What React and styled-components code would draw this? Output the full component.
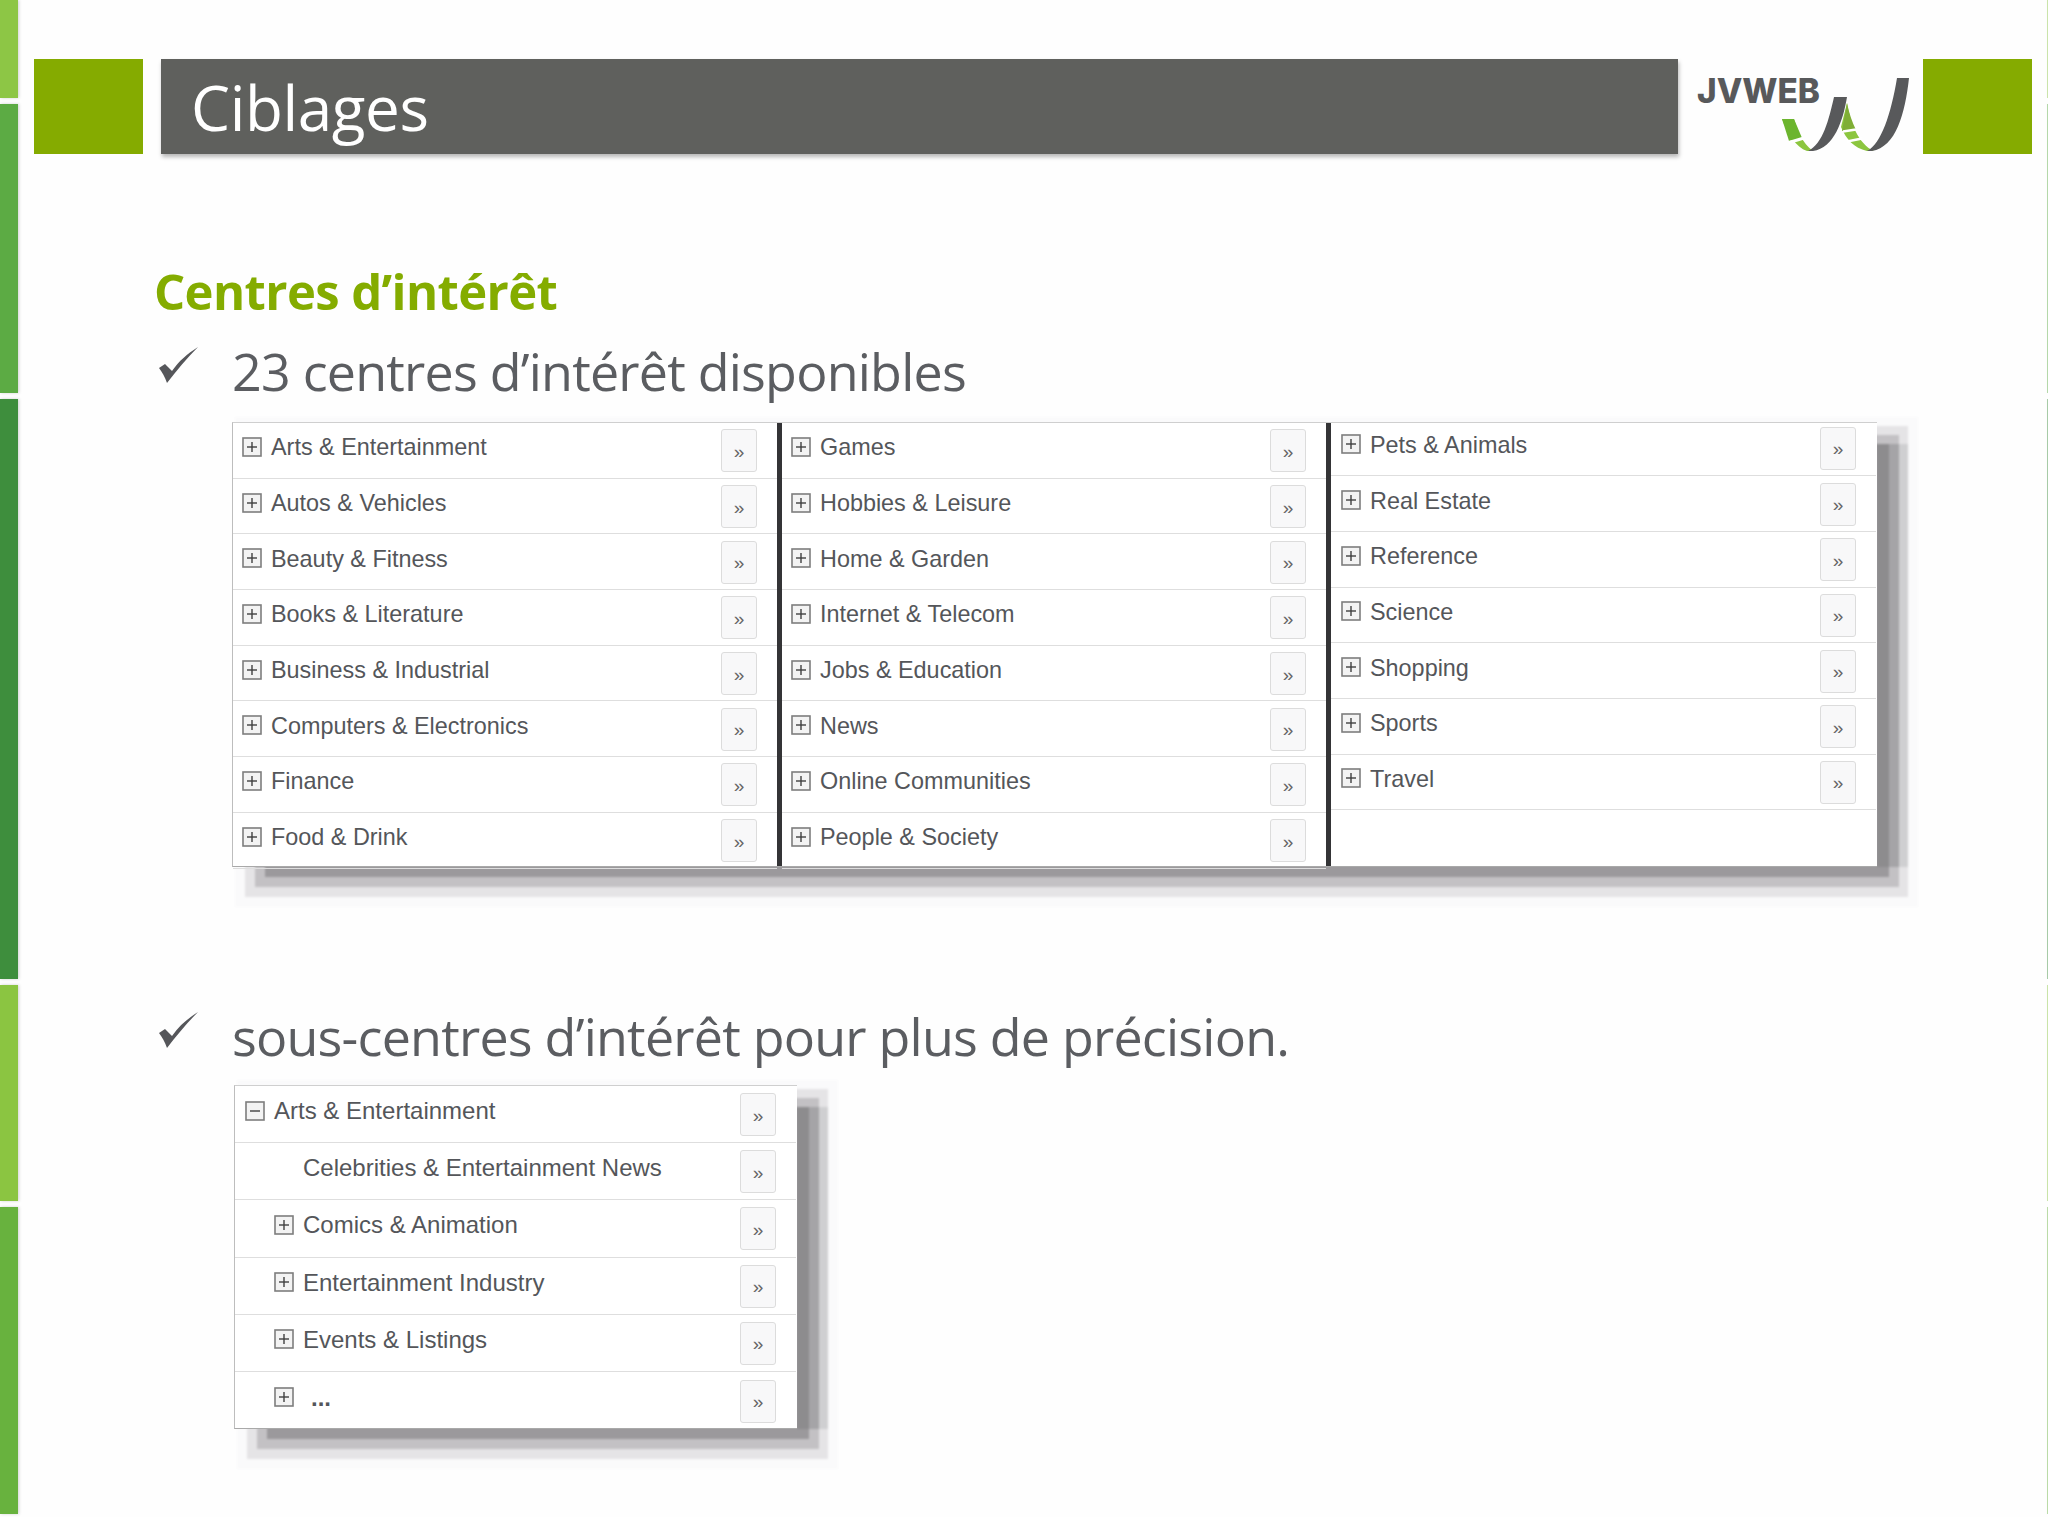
import React from "react";
import styled, { createGlobalStyle } from "styled-components";

const GlobalStyle = createGlobalStyle`
  html, body { margin: 0; padding: 0; background: #fefefe; }
  body { font-family: "Open Sans", sans-serif; overflow: hidden; }
`;

const SEGMENTS = [
  { height: 98, color: "#8dc645" },
  { height: 289, color: "#5cab44" },
  { height: 580, color: "#3e8e3d" },
  { height: 216, color: "#8bc541" },
  { height: 307, color: "#68b23e" },
];

// blocky drop shadow of the pasted screenshots: [color, left, top, right, bottom]
const rect = ([c, l, t, r, b]) =>
  `linear-gradient(${c}, ${c}) ${l}px ${t}px / calc(100% - ${l + r}px) calc(100% - ${t + b}px) no-repeat`;
const strip = ([c, r, w]) =>
  `linear-gradient(${c}, ${c}) right ${r}px top 27px / ${w}px calc(100% - 67px) no-repeat`;
const SHADOW = [
  ...[["#8d8c8e", 29, 12], ["#a5a4a7", 19, 10], ["#cfcfd1", 10, 9]].map(strip),
  ...[
    ["#9b999c", 30, 27, 29, 30],
    ["#c3c1c4", 20, 18, 19, 20],
    ["#e5e4e6", 10, 9, 10, 10],
    ["#fafafb", 0, 0, 0, 0],
  ].map(rect),
].join(", ");

const Page = styled.div`
  width: 2048px;
  height: 1517px;
  display: flex;
  overflow: hidden;
  background: #fefefe;
`;

const SideStrip = styled.div`
  width: ${(p) => p.$width}px;
  flex: none;
  display: flex;
  flex-direction: column;
  gap: 6px;
  opacity: ${(p) => (p.$pale ? 0.45 : 1)};
`;

const StripSegment = styled.div`
  background: ${(p) => p.$color};
  height: ${(p) => p.$height}px;
  flex: none;
  box-shadow: 1px 0 3px rgba(0, 0, 0, 0.18);
`;

const Main = styled.div`
  flex: 1;
  min-width: 0;
`;

const Header = styled.header`
  display: flex;
  margin: 59px 14px 0 16px;
  height: 95px;
`;

const GreenSquare = styled.div`
  width: 109px;
  flex: none;
  background: #85ab00;
`;

const TitleBar = styled.div`
  width: 1517px;
  flex: none;
  margin-left: 18px;
  padding-left: 30px;
  box-sizing: border-box;
  background: #5f605d;
  box-shadow: 1px 3px 4px rgba(0, 0, 0, 0.28);
  display: flex;
  align-items: center;
`;

const Title = styled.h1`
  margin: 1px 0 0;
  font: 400 62px/92px "Open Sans", sans-serif;
  font-stretch: 88%;
  letter-spacing: -0.4px;
  color: #fff;
`;

const Logo = styled.svg`
  width: 245px;
  height: 94px;
  flex: none;
`;

const Content = styled.main`
  padding-left: 136px;
`;

const SectionTitle = styled.h2`
  margin: 106px 0 0;
  font: 700 49px/62px "Open Sans", sans-serif;
  font-stretch: 88%;
  letter-spacing: -0.6px;
  color: #84ac00;
`;

const Bullet = styled.div`
  display: flex;
  align-items: flex-start;
  margin-top: ${(p) => p.$top}px;
  height: 60px;
`;

const CheckIcon = styled.svg`
  width: 39px;
  height: 36px;
  margin: 6px 0 0 5px;
  flex: none;
`;

const BulletText = styled.span`
  margin-left: 34px;
  font: 400 52px/60px "Open Sans", sans-serif;
  font-stretch: 88%;
  letter-spacing: -0.78px;
  color: #5b5d61;
  white-space: nowrap;
`;

const Panel = styled.section`
  position: relative;
  z-index: 0;
  margin-left: ${(p) => p.$left}px;
  margin-top: ${(p) => p.$top}px;
  width: ${(p) => p.$width}px;
  height: ${(p) => p.$height}px;

  &::before {
    content: "";
    position: absolute;
    z-index: -1;
    inset: -5px -41px -40px 3px;
    background: ${SHADOW};
    filter: blur(1.2px);
  }
`;

const PanelBody = styled.div`
  display: flex;
  height: 100%;
  box-sizing: border-box;
  background: #fff;
  border-top: 1px solid #cfcfcf;
  border-left: 1px solid #bdbdbd;
  border-bottom: 1px solid #a9a9a9;
`;

const Column = styled.ul`
  list-style: none;
  margin: ${(p) => p.$shift || 0}px 0 0;
  padding: 0;
  width: ${(p) => p.$width}px;
  flex: none;
`;

const ColumnRule = styled.div`
  width: 5px;
  flex: none;
  background: #343436;
`;

const Row = styled.li`
  display: flex;
  align-items: center;
  box-sizing: border-box;
  height: ${(p) => p.$height}px;
  padding: 0 ${(p) => p.$right}px 0 ${(p) => p.$left}px;
  border-bottom: ${(p) => (p.$last ? "none" : "1px solid #dedede")};
`;

const Toggle = styled.svg`
  width: 20px;
  height: 20px;
  flex: none;
  margin: -7px 9px 0 0;
`;

const Label = styled.span`
  flex: 1;
  margin-top: -6px;
  margin-left: ${(p) => p.$indent || 0}px;
  font: ${(p) => (p.$bold ? 700 : 400)} ${(p) => p.$size}px/28px "Liberation Sans", Arial, sans-serif;
  color: #54565a;
  white-space: nowrap;
`;

const MoreButton = styled.span`
  width: 36px;
  height: 43px;
  flex: none;
  box-sizing: border-box;
  margin-top: 1px;
  padding-top: 2px;
  display: flex;
  align-items: center;
  justify-content: center;
  border: 1px solid #dcdcdc;
  border-radius: 3px;
  background: #f8f8f9;
  font: 400 19px "Liberation Sans", Arial, sans-serif;
  color: #666;
`;

const COL1 = ["Arts & Entertainment", "Autos & Vehicles", "Beauty & Fitness", "Books & Literature", "Business & Industrial", "Computers & Electronics", "Finance", "Food & Drink"];
const COL2 = ["Games", "Hobbies & Leisure", "Home & Garden", "Internet & Telecom", "Jobs & Education", "News", "Online Communities", "People & Society"];
const COL3 = ["Pets & Animals", "Real Estate", "Reference", "Science", "Shopping", "Sports", "Travel"];

function ToggleBox({ open }) {
  return (
    <Toggle viewBox="0 0 20 20">
      <rect x="1" y="1" width="18" height="18" fill="#f3f3f3" stroke="#7d7d7d" strokeWidth="1.6" />
      <path d="M5 10H15" stroke="#3f3f3f" strokeWidth="1.4" />
      {!open && <path d="M10 5V15" stroke="#3f3f3f" strokeWidth="1.4" />}
    </Toggle>
  );
}

function TopicColumn({ items, width, shift, left, right, last }) {
  return (
    <Column $width={width} $shift={shift}>
      {items.map((name, i) => (
        <Row key={name} $height={55.7} $left={left} $right={right} $last={last && i === items.length - 1}>
          <ToggleBox />
          <Label $size={23.4}>{name}</Label>
          <MoreButton>»</MoreButton>
        </Row>
      ))}
    </Column>
  );
}

function Check() {
  return (
    <CheckIcon viewBox="0 0 39 36">
      <path d="M0 21L6 17L13 24C20 14 28 7 39 0C28 11 18 23 8 36C6 30 3 25 0 21Z" fill="#55565a" />
    </CheckIcon>
  );
}

export default function App() {
  return (
    <Page>
      <GlobalStyle />
      <SideStrip $width={18}>
        {SEGMENTS.map((s) => (
          <StripSegment key={s.color} $color={s.color} $height={s.height} />
        ))}
      </SideStrip>
      <Main>
        <Header>
          <GreenSquare />
          <TitleBar>
            <Title>Ciblages</Title>
          </TitleBar>
          <Logo viewBox="0 0 245 94">
            <text x="19" y="44" textLength="123" lengthAdjust="spacingAndGlyphs" fontFamily="Inter, Liberation Sans, sans-serif" fontWeight="800" fontSize="34" fill="#58595b">JVWEB</text>
            <path d="M104 60H116C120 72 124 84 135 92H129C118 88 110 76 104 60Z" fill="#8cc63f" />
            <path d="M104 60H116L124 79L111 82Z" fill="#6cb52e" />
            <path d="M111 83.5L126 79" stroke="#fff" strokeWidth="3" fill="none" />
            <path d="M169 44C172 62 180 85 196 92H189C176 89 168 80 163 68Z" fill="#8cc63f" />
            <path d="M169 44C171 54 174 63 178 71L164 72Z" fill="#7fae35" />
            <path d="M165 72.5L178 70.5M169 82.5L184 79.5" stroke="#fff" strokeWidth="2.6" fill="none" />
            <path d="M156 38H169C165 62 156 89 135 92H130C145 85 151 60 156 38Z" fill="#58595b" />
            <path d="M219 19H231C227 55 218 88 194 92H189C203 85 213 55 219 19Z" fill="#58595b" />
          </Logo>
          <GreenSquare />
        </Header>
        <Content>
          <SectionTitle>Centres d’intérêt</SectionTitle>
          <Bullet $top={19}>
            <Check />
            <BulletText>23 centres d’intérêt disponibles</BulletText>
          </Bullet>
          <Panel $left={78} $top={21} $width={1645} $height={445}>
            <PanelBody>
              <TopicColumn items={COL1} width={544} left={9} right={20} />
              <ColumnRule />
              <TopicColumn items={COL2} width={544} left={9} right={20} />
              <ColumnRule />
              <TopicColumn items={COL3} width={545} shift={-2.5} left={10} right={20} />
            </PanelBody>
          </Panel>
          <Bullet $top={139}>
            <Check />
            <BulletText>sous-centres d’intérêt pour plus de précision.</BulletText>
          </Bullet>
          <Panel $left={80} $top={19} $width={563} $height={344}>
            <PanelBody>
              <Column $width={561}>
                <Row $height={57.2} $left={10} $right={20}>
                  <ToggleBox open />
                  <Label $size={24}>Arts &amp; Entertainment</Label>
                  <MoreButton>»</MoreButton>
                </Row>
                <Row $height={57.2} $left={39} $right={20}>
                  <Label $size={24} $indent={29}>Celebrities &amp; Entertainment News</Label>
                  <MoreButton>»</MoreButton>
                </Row>
                {["Comics & Animation", "Entertainment Industry", "Events & Listings"].map((name) => (
                  <Row key={name} $height={57.2} $left={39} $right={20}>
                    <ToggleBox />
                    <Label $size={24}>{name}</Label>
                    <MoreButton>»</MoreButton>
                  </Row>
                ))}
                <Row $height={57.2} $left={39} $right={20} $last>
                  <ToggleBox />
                  <Label $size={24} $bold $indent={8}>...</Label>
                  <MoreButton>»</MoreButton>
                </Row>
              </Column>
            </PanelBody>
          </Panel>
        </Content>
      </Main>
      <SideStrip $width={1} $pale>
        {SEGMENTS.map((s) => (
          <StripSegment key={s.color} $color={s.color} $height={s.height} />
        ))}
      </SideStrip>
    </Page>
  );
}
